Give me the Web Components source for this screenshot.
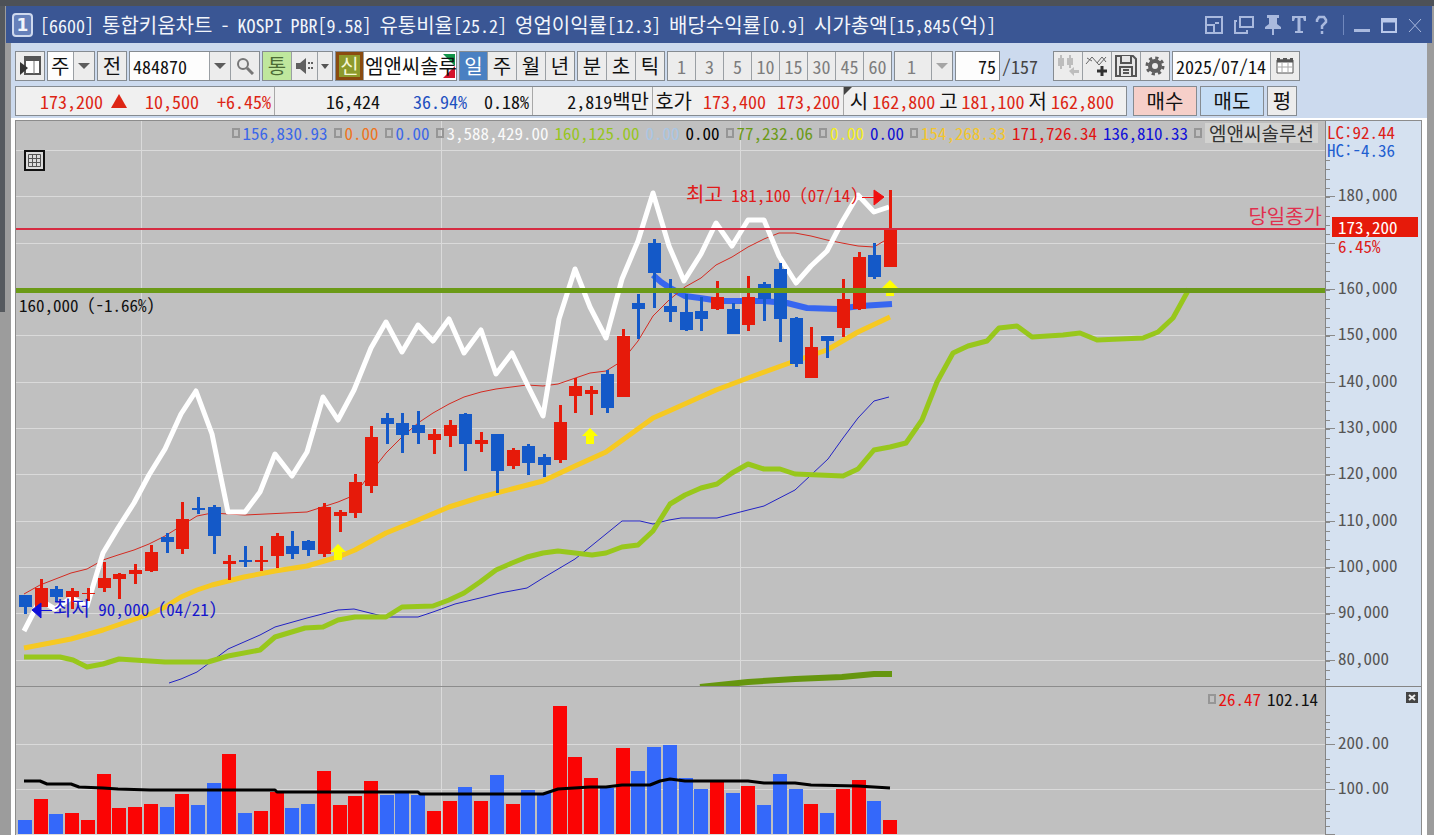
<!DOCTYPE html>
<html lang="ko">
<head>
<meta charset="UTF-8">
<meta name="viewport" content="width=device-width, initial-scale=1.0">
<title>[6600] 통합키움차트</title>
<style>
  html, body { margin: 0; height: 100%; }
  body {
    font-family: "Noto Sans Mono CJK KR", "Noto Sans CJK KR", sans-serif;
    font-size: 18px;
    line-height: 24px;
    color: #111;
    background: #9c9c9c;
    overflow: hidden;
  }
</style>
</head>
<body>
<chart-window></chart-window>

<script>
class ToolButton extends HTMLElement {
  static get observedAttributes() {
    return ['label', 'disabled'];
  }

  constructor() {
    super();
    this.attachShadow({ mode: 'open' });
  }

  connectedCallback() {
    this.render();
  }

  attributeChangedCallback() {
    if (this.isConnected) this.render();
  }

  render() {
    const label = this.getAttribute('label');
    const disabled = this.hasAttribute('disabled') ? 'disabled' : '';
    this.shadowRoot.innerHTML = `
      <style>
        :host { display: flex; flex: none; width: var(--w, 28px); }
        button {
          display: flex;
          flex: 1;
          align-items: center;
          justify-content: center;
          min-width: 0;
          padding: 0;
          border: 0;
          background: var(--bg, #ececec);
          box-shadow: var(--edge, none);
          color: var(--fg, #111);
          font: inherit;
          font-size: var(--size, 20px);
          white-space: nowrap;
        }
        ::slotted(svg) { display: block; flex: none; }
      </style>
      <button type="button" ${label ? `aria-label="${label}"` : ''} ${disabled}><slot></slot></button>
    `;
  }
}

customElements.define('tool-button', ToolButton);

class ToolGroup extends HTMLElement {
  connectedCallback() {
    this.attachShadow({ mode: 'open' }).innerHTML = `
      <style>
        :host {
          display: flex;
          flex: none;
          box-sizing: border-box;
          height: 30px;
          gap: 1px;
          border: 1px solid #858b91;
          background: #9a9fa4;
        }
      </style>
      <slot></slot>
    `;
  }
}

customElements.define('tool-group', ToolGroup);

// Hangul is set a little larger than the figures beside it.
const hangul = text => text.replace(/[가-힣]+/g, '<span class="ko">$&</span>');

class TitleBar extends HTMLElement {
  connectedCallback() {
    const parts = ['[6600]', '통합키움차트', '-', 'KOSPI', 'PBR[9.58]', '유통비율[25.2]',
      '영업이익률[12.3]', '배당수익률[0.9]', '시가총액[15,845(억)]'];
    this.attachShadow({ mode: 'open' }).innerHTML = `
      <style>
        :host {
          display: flex;
          align-items: center;
          height: 37px;
          padding: 0 4px 0 6px;
          background: #3a5694;
          color: #f2f5fb;
        }
        .num {
          display: flex;
          align-items: center;
          justify-content: center;
          box-sizing: border-box;
          width: 21px;
          height: 24px;
          border: 2px solid #cfd9ee;
          border-radius: 4px;
          background: #6680ba;
          font: bold 17px/20px "DejaVu Sans", sans-serif;
        }
        .title { display: flex; flex: 1; gap: 8px; align-items: baseline; margin-left: 7px; white-space: nowrap; }
        .ko { font-size: 20px; }
        .tools { display: flex; align-items: center; }
        tool-button { --bg: transparent; height: 28px; }
        .sep { width: 1px; height: 20px; margin: 0 4px 0 10px; background: #7088bd; }
      </style>
      <span class="num">1</span>
      <div class="title">${parts.map(p => `<span>${hangul(p)}</span>`).join('')}</div>
      <div class="tools">
        <tool-button label="작게" style="--w:30px"><svg width="20" height="20" fill="none" stroke="#a9b9de" stroke-width="2"><path d="M2 2h16v16H2zM2 10h8v8M11 8h4"/></svg></tool-button>
        <tool-button label="복사" style="--w:30px"><svg width="20" height="20" fill="none" stroke="#a9b9de" stroke-width="2"><path d="M6 2h13v10H6zM3 6H1v12h12v-3"/></svg></tool-button>
        <tool-button label="고정"><svg width="20" height="22" fill="#a9b9de"><path d="M4 1h12v3h-2v6l4 3v2h-7v6H9v-6H2v-2l4-3V4H4z"/></svg></tool-button>
        <tool-button label="글자" style="--w:24px"><svg width="16" height="20" fill="#a9b9de"><path d="M1 1h14v5h-2l-1-3H9.500v13H12v2H4v-2h2.500V3H4L3 6H1z"/></svg></tool-button>
        <tool-button label="도움말" style="--w:22px"><svg width="14" height="20" fill="none" stroke="#a9b9de" stroke-width="2.500"><path d="M2 7V5l2-3h5l2 3v2l-4 4v3M7 16v3"/></svg></tool-button>
        <span class="sep"></span>
        <tool-button label="최소화"><svg width="16" height="20"><path d="M0 14h16v3H0z" fill="#a9b9de"/></svg></tool-button>
        <tool-button label="최대화" style="--w:26px"><svg width="16" height="20" fill="none" stroke="#b9c8ea" stroke-width="2"><path d="M1 4h14v13H1z"/><path d="M1 6h14" stroke-width="3"/></svg></tool-button>
        <tool-button label="닫기" style="--w:26px"><svg width="14" height="16" fill="none" stroke="#a9b9de"><path d="M1 2l12 13M13 2L1 15"/></svg></tool-button>
      </div>
    `;
  }
}

customElements.define('title-bar', TitleBar);

const arrow = (color = '#5c5c5c') =>
  `<svg width="12" height="6" fill="${color}"><path d="M0 0h12L6 6z"/></svg>`;

class ChartToolbar extends HTMLElement {
  connectedCallback() {
    const minutes = [1, 3, 5, 10, 15, 30, 45, 60]
      .map(n => `<tool-button>${n}</tool-button>`).join('');
    this.attachShadow({ mode: 'open' }).innerHTML = `
      <style>
        :host { display: flex; gap: 2px; padding: 8px 0 0 4px; background: #ccdaee; }
        input, select {
          box-sizing: border-box;
          min-width: 0;
          margin: 0;
          padding: 0 3px;
          border: 0;
          border-radius: 0;
          background: #fdfdfd;
          color: #111;
          font: inherit;
          appearance: none;
          opacity: 1;
        }
        .arrow { --w: 20px; }
        .code { width: 79px; }
        .week { width: 25px; font-size: 20px; }
        .count { width: 36px; padding: 0 0 0 12px; background: #ececec; color: #808080; }
        .bars { width: 43px; text-align: right; }
        .date { width: 97px; }
        .grey { --fg: #7d7d7d; --w: 27px; --size: 18px; }
        .total { width: 49px; padding-top: 3px; color: #444; }
        .name { position: relative; width: 92px; padding: 2px 0 2px 1px; box-sizing: border-box; background: #fff; font-size: 20px; white-space: nowrap; }
        .name svg { position: absolute; right: 1px; top: 2px; }
        .name span { position: relative; }
      </style>
      <tool-group>
        <tool-button label="메뉴"><svg width="22" height="20"><path d="M6 1h15v17H6z" fill="#fff" stroke="#555" stroke-width="2"/><path d="M5 0h17v5H5z" fill="#555"/><path d="M15 5v13" stroke="#777"/><path d="M1 6l8 6-8 7z" fill="#333"/></svg></tool-button>
      </tool-group>
      <tool-group>
        <select class="week" aria-label="주기"><option>주</option></select>
        <tool-button class="arrow" label="주기 선택">${arrow()}</tool-button>
      </tool-group>
      <tool-group><tool-button>전</tool-button></tool-group>
      <tool-group>
        <input class="code" aria-label="종목코드" value="484870">
        <tool-button class="arrow" label="종목 선택">${arrow()}</tool-button>
        <tool-button label="검색"><svg width="18" height="18" fill="none" stroke="#777" stroke-width="2"><circle cx="7" cy="7" r="5"/><path d="M11 11l6 6" stroke-width="3"/></svg></tool-button>
      </tool-group>
      <tool-group>
        <tool-button style="--bg:#bfe79d;--fg:#4c6b35">통</tool-button>
        <tool-button label="소리" style="--w:25px"><svg width="18" height="18" fill="#606060"><path d="M0 6h4l6-5v16l-6-5H0zM12 5h2v2h-2zM15 5h2v2h-2zM12 10h2v2h-2zM15 10h2v2h-2z"/></svg></tool-button>
        <tool-button label="소리 설정" style="--w:14px"><svg width="8" height="5" fill="#555"><path d="M0 0h8L4 5z"/></svg></tool-button>
      </tool-group>
      <tool-group>
        <tool-button style="--w:27px;--bg:#8d9a2c;--fg:#f6f7d5;--edge:inset 0 0 0 3px #8a4b10">신</tool-button>
        <div class="name"><svg width="12" height="24"><path d="M0 0h12v12z" fill="#12954a"/><path d="M12 12v12H0z" fill="#d4132b"/></svg><span>엠앤씨솔루</span></div>
      </tool-group>
      <tool-group>
        <tool-button style="--bg:#4a80c2;--fg:#fff;--w:27px">일</tool-button><tool-button>주</tool-button><tool-button>월</tool-button><tool-button>년</tool-button>
      </tool-group>
      <tool-group>
        <tool-button>분</tool-button><tool-button>초</tool-button><tool-button>틱</tool-button>
      </tool-group>
      <tool-group class="grey">${minutes}</tool-group>
      <tool-group>
        <select class="count" aria-label="틱 수" disabled><option>1</option></select>
        <tool-button class="arrow" label="틱 수 선택" disabled>${arrow('#a5a5a5')}</tool-button>
      </tool-group>
      <tool-group><input class="bars" aria-label="봉 개수" value="75"></tool-group>
      <span class="total">/157</span>
      <tool-group>
        <tool-button label="이전 봉" disabled><svg width="22" height="22" fill="#bdbdbd"><path d="M3 0h2v14H3zM1 3h6v8H1zM12 0h2v13h-2zM10 3h6v7h-6zM12 16l5-4v3h5v3h-5v3z"/></svg></tool-button>
        <tool-button label="지표 추가"><svg width="24" height="22" fill="none" stroke="#666"><path d="M1 9l6-7 7 8 7-8M2 3l5 3M12 8l5-6 4 5"/><path d="M17 11v10M12 16h10" stroke="#333" stroke-width="3"/></svg></tool-button>
        <tool-button label="저장"><svg width="22" height="22" fill="#e6e6e6" stroke="#555" stroke-width="2"><path d="M1 1h17l3 3v17H1z"/><path d="M6 1v7h10V1M5 21v-9h12v9M8 15h6M8 18h6"/></svg></tool-button>
        <tool-button label="설정"><svg width="20" height="20" fill="none" stroke="#5f5f5f"><circle cx="10" cy="10" r="5" stroke-width="4"/><circle cx="10" cy="10" r="8" stroke-width="3" stroke-dasharray="3.2 3.08"/></svg></tool-button>
      </tool-group>
      <tool-group>
        <input class="date" aria-label="기준일" value="2025/07/14">
        <tool-button label="달력"><svg width="18" height="16" fill="#fff" stroke="#555"><path d="M1 2h16v13H1z"/><path d="M1 3h16M1 1h3M7 1h4M14 1h3" stroke-width="3"/><path d="M1 9h16M6 5v10M12 5v10" stroke="#aaa"/></svg></tool-button>
      </tool-group>
    `;
  }
}

customElements.define('chart-toolbar', ChartToolbar);

class QuoteStrip extends HTMLElement {
  connectedCallback() {
    this.attachShadow({ mode: 'open' }).innerHTML = `
      <style>
        :host { display: flex; gap: 3px; padding: 5px 0 2px 4px; background: #ccdaee; }
        .strip {
          display: flex;
          box-sizing: border-box;
          height: 30px;
          margin-right: 3px;
          border: 1px solid #858b91;
          background: #f0f0f0;
        }
        .cell { display: flex; align-items: center; justify-content: flex-end; gap: 8px; box-sizing: border-box; padding-right: 3px; white-space: nowrap; }
        .cell + .cell { border-left: 1px solid #a8a8a8; }
        .w { width: 258px; }
        .m { width: 120px; }
        .h { width: 191px; gap: 11px; }
        .l { position: relative; width: 283px; padding-right: 12px; gap: 4px; }
        .l svg { position: absolute; left: 0; top: 0; }
        .n { width: 64px; text-align: right; }
        .p { width: 79px; text-align: right; }
        .s { width: 54px; text-align: right; }
        .ko { font-size: 20px; }
        .up { color: #dd2615; }
        .down { color: #1f50c0; }
        .wide { --w: 62px; }
      </style>
      <div class="strip">
        <div class="cell w"><span class="up">173,200</span><svg width="16" height="14" fill="#dd2615"><path d="M8 0l8 14H0z"/></svg><span class="n up">10,500</span><span class="n up">+6.45%</span></div>
        <div class="cell w"><span class="p">16,424</span><span class="p down">36.94%</span><span class="s">0.18%</span></div>
        <div class="cell m"><span>${hangul('2,819백만')}</span></div>
        <div class="cell h"><span class="ko">호가</span><span class="up">173,400</span><span class="up">173,200</span></div>
        <div class="cell l"><svg width="8" height="8" fill="#444"><path d="M0 0h8L0 8z"/></svg><span class="ko">시</span><span class="up">162,800</span><span class="ko">고</span><span class="up">181,100</span><span class="ko">저</span><span class="up">162,800</span></div>
      </div>
      <tool-group><tool-button class="wide" style="--bg:#f6cfc9">매수</tool-button></tool-group>
      <tool-group><tool-button class="wide" style="--bg:#c5ddf5">매도</tool-button></tool-group>
      <tool-group><tool-button>평</tool-button></tool-group>
    `;
  }
}

customElements.define('quote-strip', QuoteStrip);

// Each row is [color, high, bodyTop, bodyBottom, low], one per day, 90,000 won low on 04/21.
const CANDLES = [
  ['b', 595, 595, 607, 614], ['r', 579, 588, 607, 607], ['b', 586, 589, 597, 602], ['r', 588, 591, 597, 609],
  ['r', 588, 593, 594, 601], ['r', 562, 578, 588, 592], ['r', 573, 574, 579, 599], ['r', 564, 570, 574, 584],
  ['r', 545, 552, 571, 572], ['b', 533, 537, 542, 553], ['r', 502, 519, 549, 554], ['b', 497, 508, 510, 514],
  ['b', 505, 507, 536, 554], ['r', 555, 561, 564, 580], ['b', 546, 560, 562, 567], ['r', 546, 560, 562, 571],
  ['r', 533, 536, 556, 568], ['b', 531, 546, 554, 559], ['b', 540, 541, 550, 556], ['r', 503, 507, 554, 557],
  ['r', 510, 512, 516, 532], ['r', 474, 482, 513, 518], ['r', 426, 437, 486, 493], ['b', 413, 418, 424, 444],
  ['b', 413, 423, 435, 453], ['b', 411, 425, 433, 444], ['r', 429, 434, 440, 454], ['r', 420, 425, 436, 447],
  ['b', 413, 414, 444, 471], ['r', 432, 440, 444, 452], ['b', 434, 434, 471, 493], ['r', 448, 450, 466, 469],
  ['b', 444, 446, 463, 475], ['b', 454, 457, 465, 477], ['r', 405, 422, 460, 463], ['r', 378, 386, 396, 413],
  ['r', 386, 390, 394, 415], ['b', 370, 374, 408, 413], ['r', 329, 336, 397, 397], ['b', 294, 303, 309, 339],
  ['b', 239, 243, 273, 308], ['b', 279, 306, 312, 322], ['b', 294, 312, 330, 331], ['b', 297, 311, 319, 331],
  ['r', 281, 297, 309, 310], ['b', 303, 309, 334, 334], ['r', 276, 297, 325, 331], ['b', 282, 284, 299, 321],
  ['b', 263, 269, 319, 342], ['b', 317, 318, 364, 367], ['r', 327, 347, 378, 378], ['b', 336, 336, 341, 358],
  ['r', 279, 299, 328, 337], ['r', 252, 257, 309, 310], ['b', 243, 255, 277, 279], ['r', 190, 229, 267, 267]
];

const VOLUMES = [
  820, 799, 814, 813, 820, 774, 808, 807, 804, 807, 794, 805, 783, 754, 813, 811, 792, 808, 804, 771,
  805, 796, 781, 795, 793, 795, 811, 801, 787, 801, 775, 804, 790, 793, 706, 757, 778, 788, 748, 771,
  747, 745, 778, 789, 782, 793, 786, 805, 774, 789, 804, 813, 789, 780, 801, 820
];

const LINES = {
  envelope: '24,594 40,585 71,573 87,569 103,560 118,555 134,550 149,544 165,536 181,526 197,516 212,513 245,515 307,512 338,502 350,497 362,485 375,467 386,453 402,437 418,423 433,413 449,404 464,397 481,392 496,389 527,385 543,386 558,384 590,373 606,371 622,361 638,341 653,316 669,300 685,287 701,278 716,265 732,257 748,247 764,239 779,233 795,233 811,236 827,240 842,243 858,246 874,247 889,238',
  white: '24,631 40,600 55,609 71,598 87,606 103,553 118,528 134,503 149,475 165,449 181,414 196,391 212,434 228,512 245,512 260,492 275,454 292,476 307,452 323,397 338,420 354,390 371,348 386,322 402,352 418,325 433,341 449,319 464,353 481,330 496,374 512,353 527,384 543,416 559,319 575,269 590,307 606,338 622,279 638,241 653,193 669,246 684,281 701,254 716,223 732,246 748,220 764,220 779,256 796,283 811,266 827,251 842,222 858,195 874,212 889,207',
  yellow: '24,648 71,639 103,630 150,614 165,607 181,597 197,590 212,585 244,577 275,571 307,566 338,557 355,550 386,533 418,520 449,507 481,497 512,489 543,481 575,466 606,452 653,418 669,411 716,390 748,378 795,361 827,350 858,332 890,317',
  lime: '24,657 60,657 73,660 87,667 103,664 119,659 134,660 165,662 208,662 228,656 260,650 275,637 305,628 323,627 338,620 355,617 386,617 402,607 433,606 449,600 464,593 480,582 496,570 512,563 527,557 543,553 558,551 592,555 606,553 622,547 638,545 653,531 670,504 685,495 701,488 717,484 732,473 748,464 764,469 780,469 795,474 843,476 858,469 874,450 890,447 906,443 922,420 937,382 953,353 968,346 987,341 999,328 1017,326 1032,337 1063,335 1080,333 1097,340 1143,338 1158,332 1173,318 1189,289',
  slow: '169,683 181,679 197,672 212,661 228,649 244,642 260,635 275,627 307,618 338,610 354,609 386,617 418,617 433,612 455,604 480,598 500,593 527,588 543,578 575,559 590,547 606,534 622,521 640,521 653,524 669,520 681,518 717,518 748,510 764,506 795,490 811,475 828,459 843,438 858,418 874,401 889,397',
  blue: '653,275 661,282 670,288 685,296 700,298 720,301 763,301 787,303 807,308 837,309 860,306 892,304',
  base: '700,687 748,682 795,679 842,677 874,674 892,674',
  volume: '24,781 40,781 47,784 71,784 79,787 103,788 118,789 150,790 275,790 277,792 418,792 420,794 543,794 558,789 590,787 606,787 622,785 650,785 660,781 670,779 685,781 748,781 764,783 795,783 811,785 858,786 874,787 890,788'
};

const RED = '#e61a0a';
const BLUE = '#1459c8';
const STEP = 865 / 55;

// Drawing coordinates start at the corner of the price pane.
const LEFT = 16;
const TOP = 121;
const dayX = i => Math.round(25 + i * STEP);
const rungs = Array.from({ length: 12 }, (_, k) => Math.round(150 + k * 46.33));

function polyline(points, color, width) {
  return `<polyline points="${points}" fill="none" stroke="${color}" stroke-width="${width}" stroke-linejoin="round"/>`;
}

function grid(ys) {
  return ys.map(y => `<path d="M16 ${y}.5h4000"/>`).join('') +
    [141, 441, 740].map(x => `<path d="M${x}.5 ${TOP}v720"/>`).join('');
}

function upArrow(x, y) {
  return `<path d="M${x} ${y}l8 8h-4v8h-8v-8h-4z" fill="#ffff00"/>`;
}

class PriceChart extends HTMLElement {
  connectedCallback() {
    const candles = CANDLES.map(([c, high, top, bottom, low], i) => {
      const x = dayX(i);
      return `<g fill="${c === 'r' ? RED : BLUE}"><path d="M${x - 1} ${high}h3V${low}h-3z"/>
        <path d="M${x - 6} ${top}h13V${bottom}h-13z"/></g>`;
    }).join('');

    const legend = [
      ['156,830.93', '#3c68e8', 1], ['0.00', '#ee7420', 1], ['0.00', '#3c68e8', 1], ['3,588,429.00', '#fafafa', 1],
      ['160,125.00', '#97c51f'], ['0.00', '#a9c6e4'], ['0.00', '#000'], ['77,232.06', '#6b9a17', 1],
      ['0.00', '#f6f020', 1], ['0.00', '#1010d8'], ['154,268.33', '#f2c52e', 1], ['171,726.34', '#e01414'], ['136,810.33', '#1010d8']
    ].map(([text, color, box]) => `${box ? '<i></i>' : ''}<span style="color:${color}">${text}</span>`).join('');

    this.attachShadow({ mode: 'open' }).innerHTML = `
      <style>
        :host { display: block; position: relative; overflow: hidden; background: #c0c0c0; }
        .plot { display: block; width: 100%; height: 100%; }
        .legend { position: absolute; top: 0; right: 7px; display: flex; align-items: center; gap: 6px; white-space: nowrap; }
        .legend i { box-sizing: border-box; width: 8px; height: 10px; margin-right: -3px; border: 2px solid #969696; }
        .legend b { padding: 0 4px; background: #d2d2d0; color: #333; font-size: 19px; font-weight: normal; line-height: 20px; }
        .close { position: absolute; top: 83px; right: 3px; color: #e0304f; font-size: 20px; }
        .ko { font-size: 20px; }
        .view { position: absolute; left: 8px; top: 29px; width: 21px; height: 21px; padding: 0; border: 0; background: none; }
        .view svg { display: block; }
      </style>
      <svg class="plot"><g transform="translate(${-LEFT} ${-TOP})">
        <g stroke="#dadada">${grid(rungs)}</g>
        ${polyline(LINES.blue, '#3766f0', 6)}
        ${polyline(LINES.envelope, '#d42a20', 1)}
        ${polyline(LINES.white, '#fff', 5)}
        ${polyline(LINES.yellow, '#f6c922', 5)}
        ${polyline(LINES.slow, '#2222c4', 1)}
        ${polyline(LINES.lime, '#98c71c', 5)}
        ${polyline(LINES.base, '#66960f', 6)}
        ${candles}
        ${upArrow(338, 544)}${upArrow(590, 428)}${upArrow(890, 280)}
        <path d="M16 229h4000" stroke="#d62c42" stroke-width="2"/>
        <path d="M16 290.5h4000" stroke="#6b9a17" stroke-width="5"/>
        <path d="M862 197.5h14M874 190l10 7-10 8z" fill="#f01010" stroke="#f01010"/>
        <path d="M52 610.5H38M41 603l-9 7 9 8z" fill="#1010d8" stroke="#1010d8"/>
        <text x="686" y="202" fill="#e01a1a"><tspan class="ko">최고</tspan> 181,100 (07/14)</text>
        <text x="53" y="616" fill="#1717cc"><tspan class="ko">최저</tspan> 90,000 (04/21)</text>
        <text x="19" y="312" fill="#111">160,000 (-1.66%)</text>
      </g></svg>
      <div class="legend">${legend}<i></i><b>엠앤씨솔루션</b></div>
      <span class="close">당일종가</span>
      <button class="view" type="button" aria-label="데이터 보기"><svg width="21" height="21" fill="none" stroke="#111" stroke-width="2"><path d="M1 1h19v19H1z" fill="#dcdcdc"/><path d="M4.5 4.5h12v12h-12zM4.500 8.500h12M4.500 12.500h12M8.500 4.500v12M12.500 4.500v12" stroke="#555" stroke-width="1"/></svg></button>
    `;
  }
}

customElements.define('price-chart', PriceChart);

class VolumeChart extends HTMLElement {
  connectedCallback() {
    const bars = VOLUMES.map((y, i) =>
      `<path d="M${dayX(i) - 7} ${y}h14V834h-14z" fill="${CANDLES[i][0] === 'r' ? '#fb0404' : '#3468fa'}"/>`).join('');
    this.attachShadow({ mode: 'open' }).innerHTML = `
      <style>
        :host { display: block; position: relative; overflow: hidden; border-top: 1px solid #8c8c8c; background: #c0c0c0; }
        svg { display: block; width: 100%; height: 100%; }
        .legend { position: absolute; top: 0; right: 7px; display: flex; align-items: center; gap: 6px; }
        .legend i { box-sizing: border-box; width: 8px; height: 10px; margin-right: -3px; border: 2px solid #969696; }
        .up { color: #e81010; }
      </style>
      <svg><g transform="translate(${-LEFT} -687)">
        <g stroke="#dadada">${grid([744, 789, 834])}</g>
        ${bars}
        ${polyline(LINES.volume, '#000', 3)}
      </g></svg>
      <div class="legend"><i></i><span class="up">26.47</span><span>102.14</span></div>
    `;
  }
}

customElements.define('volume-chart', VolumeChart);

class PriceAxis extends HTMLElement {
  connectedCallback() {
    let ticks = '';
    for (let y = 160; y < 684; y += 9.27) ticks += `<path d="M0 ${Math.round(y) - TOP}.5h4"/>`;
    const labels = rungs.slice(1).map((y, k) => {
      const value = 180 - k * 10;
      const text = value === 170 ? '' : `<text x="12" y="${y - TOP + 5}">${value},000</text>`;
      return `<path d="M0 ${y - TOP}.5h9"/>${text}`;
    }).join('');
    this.attachShadow({ mode: 'open' }).innerHTML = `
      <style>
        :host { display: block; position: relative; border-left: 1px solid #858585; background: #d5e1f0; }
        svg { display: block; width: 100%; height: 100%; stroke: #8a8a8a; }
        text { fill: #555; stroke: none; }
        .limits { position: absolute; left: 1px; top: 2px; line-height: 18px; }
        .now { position: absolute; left: 6px; right: 3px; top: 96px; line-height: 18px; }
        .now span { display: block; padding-left: 6px; }
        .now .tag { background: ${RED}; color: #fff; line-height: 20px; }
        .up { color: #dd2018; }
        .down { color: #1f5fd0; }
      </style>
      <svg>${ticks}${labels}</svg>
      <div class="limits"><div class="up">LC:92.44</div><div class="down">HC:-4.36</div></div>
      <div class="now"><span class="tag">173,200</span><span class="up">6.45%</span></div>
    `;
  }
}

customElements.define('price-axis', PriceAxis);

class VolumeAxis extends HTMLElement {
  connectedCallback() {
    const minor = [715, 722, 729, 737, 759, 767, 774, 782, 804, 811, 818, 826]
      .map(y => `<path d="M0 ${y - 687}.5h4"/>`).join('');
    this.attachShadow({ mode: 'open' }).innerHTML = `
      <style>
        :host { display: block; position: relative; overflow: hidden; border: solid #858585; border-width: 1px 0 0 1px; background: #d5e1f0; }
        .ticks { display: block; width: 100%; height: 100%; stroke: #8a8a8a; }
        text { fill: #555; stroke: none; }
        button { position: absolute; right: 3px; top: 5px; width: 12px; height: 11px; padding: 0; border: 0; background: #444; }
        button svg { display: block; }
      </style>
      <svg class="ticks">${minor}<path d="M0 57.5h9M0 102.500h9M0 147.500h9"/>
        <text x="12" y="62">200.00</text><text x="12" y="107">100.00</text></svg>
      <button type="button" aria-label="지표 닫기"><svg width="12" height="11" stroke="#eee" stroke-width="2"><path d="M3 3l6 5M9 3L3 8"/></svg></button>
    `;
  }
}

customElements.define('volume-axis', VolumeAxis);

class ChartWindow extends HTMLElement {
  connectedCallback() {
    this.attachShadow({ mode: 'open' }).innerHTML = `
      <style>
        :host {
          display: flex;
          flex-direction: column;
          box-sizing: border-box;
          height: 100vh;
          padding: 0 2px 0 6px;
          border-top: 6px solid #4d5157;
          background: linear-gradient(90deg, #55595e 5px, #9c9c9c 5px) 0 0 / 100% 306px no-repeat, #9c9c9c;
        }
        .body { display: flex; flex: 1; flex-direction: column; min-height: 0; margin: 0 5px; }
        .charts {
          display: grid;
          flex: 1;
          grid-template: 566px 1fr / 1fr 97px;
          border: solid #fff;
          border-width: 2px 5px 0 4px;
          background: #fff;
          font-size: 17px;
        }
        .frame {
          display: grid;
          grid-column: 1 / -1;
          grid-row: 1 / -1;
          grid-template: subgrid / subgrid;
          border: 1px solid #8c8c8c;
          border-bottom: 0;
        }
      </style>
      <title-bar></title-bar>
      <div class="body">
        <chart-toolbar></chart-toolbar>
        <quote-strip></quote-strip>
        <div class="charts"><div class="frame">
          <price-chart></price-chart><price-axis></price-axis>
          <volume-chart></volume-chart><volume-axis></volume-axis>
        </div></div>
      </div>
    `;
  }
}

customElements.define('chart-window', ChartWindow);
</script>
</body>
</html>
